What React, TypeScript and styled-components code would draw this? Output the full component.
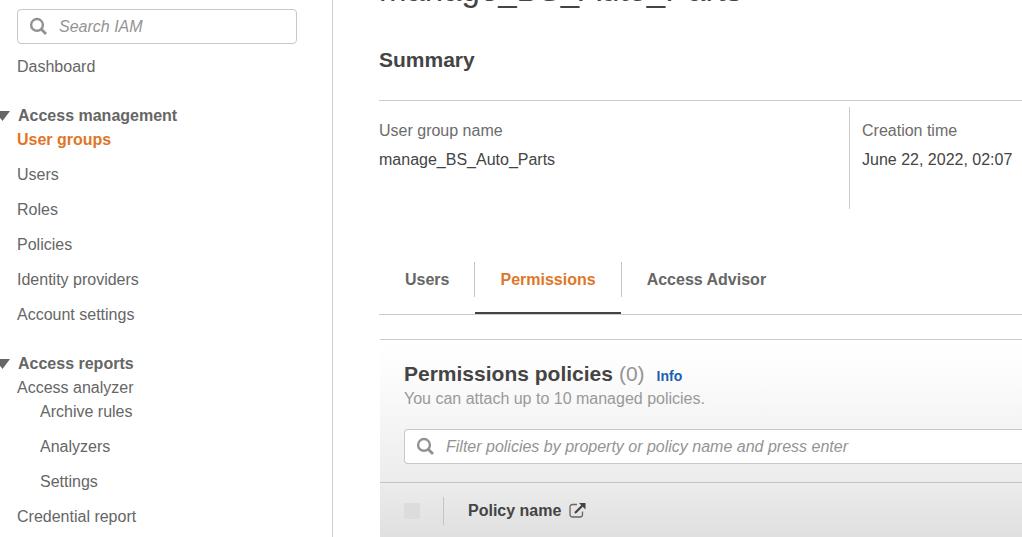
import React from "react";
import styled, { createGlobalStyle } from "styled-components";

const GlobalStyle = createGlobalStyle`
  *, *::before, *::after { box-sizing: border-box; }
  body {
    margin: 0;
    background: #fff;
    color: #444;
    font-family: "Liberation Sans", Arial, Helvetica, sans-serif;
    font-size: 16px;
    line-height: 24px;
    overflow: hidden;
  }
  button, input { font: inherit; color: inherit; }
  h1, h2, h3, p, ul, dl, dt, dd { margin: 0; padding: 0; }
  ul { list-style: none; }
`;

const Page = styled.div`
  display: flex;
  min-height: 100vh;
`;

const Sidebar = styled.nav`
  flex: 0 0 333px;
  padding: 9px 35px 0 17px;
  border-right: 1px solid #ccc;
  overflow: hidden;
`;

const SearchField = styled.label<{ $bleed?: boolean }>`
  display: flex;
  align-items: center;
  gap: 11px;
  height: 35px;
  padding-left: 11px;
  background: #fff;
  border: 1px solid #c8c8c8;
  border-right-width: ${(p) => (p.$bleed ? 0 : 1)}px;
  border-radius: ${(p) => (p.$bleed ? "4px 0 0 4px" : "4px")};
`;

const SearchInput = styled.input`
  flex: 1;
  min-width: 0;
  padding: 0;
  border: 0;
  outline: 0;
  background: transparent;
  &::placeholder {
    color: #949494;
    opacity: 1;
    font-style: italic;
  }
`;

const NavLink = styled.a<{ $active?: boolean }>`
  display: block;
  color: ${(p) => (p.$active ? "#e07628" : "#666")};
  font-weight: ${(p) => (p.$active ? 700 : 400)};
  text-decoration: none;
`;

const Dashboard = styled.div`
  padding: 11px 0 25px;
`;

const Section = styled.section`
  margin-bottom: 25px;
`;

const SectionHeading = styled.h2`
  font-size: 16px;
  line-height: 24px;
`;

const SectionToggle = styled.button`
  display: flex;
  align-items: center;
  gap: 8px;
  margin-left: -22px;
  padding: 0;
  border: 0;
  background: none;
  color: #666;
  font-weight: 700;
`;

const NavList = styled.ul`
  display: flex;
  flex-direction: column;
  gap: 11px;
`;

const SubList = styled(NavList)`
  padding-left: 23px;
`;

const Main = styled.main`
  flex: 1;
  min-width: 0;
  padding-left: 46px;
`;

const Title = styled.h1`
  margin-top: -30px;
  color: #444;
  font-size: 33px;
  font-weight: 400;
  line-height: 40px;
`;

const SummaryHeading = styled.h2`
  padding: 38px 0 28px;
  border-bottom: 1px solid #ccc;
  font-size: 21px;
  line-height: 24px;
`;

const Summary = styled.dl`
  display: grid;
  grid-template-columns: minmax(0, 1fr) 173px;
  padding-top: 6px;
`;

const Fact = styled.div<{ $divided?: boolean }>`
  display: flex;
  flex-direction: column;
  gap: 5px;
  height: 102px;
  padding: 12px 0 0 ${(p) => (p.$divided ? 12 : 0)}px;
  border-left: ${(p) => (p.$divided ? "1px solid #ccc" : "0")};
  white-space: nowrap;
`;

const FactLabel = styled.dt`
  color: #6c6c6c;
`;

const FactValue = styled.dd`
  color: #444;
`;

const TabBar = styled.div`
  display: flex;
  margin-top: 53px;
  padding-left: 1px;
  border-bottom: 1px solid #ccc;
`;

const Tab = styled.button<{ $active?: boolean }>`
  height: 52px;
  padding: 0 0 14px;
  border: 0;
  border-bottom: 2px solid ${(p) => (p.$active ? "#444" : "transparent")};
  background: none;
  color: ${(p) => (p.$active ? "#e07628" : "#666")};
  font-weight: 700;
`;

const TabLabel = styled.span`
  display: block;
  padding: 0 25px;
`;

const TabDivider = styled.span`
  width: 1px;
  height: 35px;
  background: #c4c4c4;
`;

const Panel = styled.section`
  margin: 24px 0 0 1px;
  border-top: 1px solid #ccc;
`;

const PanelHeader = styled.header`
  padding: 21px 0 18px 24px;
  background: linear-gradient(#fff, #fdfdfd 20%, #ececec);
`;

const PanelTitle = styled.div`
  display: flex;
  align-items: baseline;
  gap: 6px;
  height: 26px;
`;

const PanelHeading = styled.h2`
  font-size: 21px;
  line-height: 26px;
`;

const Count = styled.span`
  color: #949494;
  font-size: 21px;
`;

const InfoLink = styled.a`
  margin-left: 6px;
  color: #1a5fb0;
  font-size: 14px;
  line-height: 20px;
  font-weight: 700;
  text-decoration: none;
`;

const Description = styled.p`
  margin-bottom: 18px;
  color: #999;
`;

const Table = styled.table`
  width: 100%;
  border-collapse: collapse;
  border-top: 1px solid #c4c4c4;
  background: linear-gradient(#ececec, #dfdfdf);
`;

const HeadCell = styled.th<{ $select?: boolean }>`
  width: ${(p) => (p.$select ? "63px" : "auto")};
  height: 56px;
  padding: 0;
  text-align: left;
`;

const CellContent = styled.div<{ $divided?: boolean }>`
  display: flex;
  align-items: center;
  gap: 8px;
  height: 28px;
  padding-left: 24px;
  border-left: ${(p) => (p.$divided ? "1px solid #c4c4c4" : "0")};
`;

const SelectAll = styled.input`
  appearance: none;
  width: 16px;
  height: 16px;
  margin: 0;
  border-radius: 1px;
  background: #dcdcdc;
`;

const SearchIcon = () => (
  <svg width="19" height="19" viewBox="0 0 19 19" fill="none" stroke="#929292" aria-hidden="true">
    <circle cx="8" cy="7.9" r="5.9" strokeWidth="2.4" />
    <path d="M12 12l5 5" strokeWidth="2.8" />
  </svg>
);

const Caret = () => (
  <svg width="15" height="10" viewBox="0 0 15 10" fill="#666" aria-hidden="true">
    <path d="M0 0h15L7.5 10z" />
  </svg>
);

const ExternalIcon = () => (
  <svg width="17" height="17" viewBox="0 0 17 17" fill="none" stroke="#444" aria-hidden="true">
    <path
      d="M8 2.500H3.500a2.500 2.500 0 0 0-2.500 2.500v7.500a2.500 2.500 0 0 0 2.500 2.500h7.500a2.500 2.500 0 0 0 2.500-2.500V9.500"
      stroke="#666"
      strokeWidth="1.300"
    />
    <path d="M6 11L13.500 3.500" strokeWidth="2.200" />
    <path d="M10 1H16.500v6.500z" fill="#444" stroke="none" />
  </svg>
);

type NavItem = { label: string; active?: boolean };

const management: NavItem[] = [
  { label: "User groups", active: true },
  { label: "Users" },
  { label: "Roles" },
  { label: "Policies" },
  { label: "Identity providers" },
  { label: "Account settings" },
];

const analyzer: NavItem[] = [{ label: "Archive rules" }, { label: "Analyzers" }, { label: "Settings" }];

const Items = ({ items }: { items: NavItem[] }) => (
  <>
    {items.map((item) => (
      <li key={item.label}>
        <NavLink href="#" $active={item.active} aria-current={item.active ? "page" : undefined}>
          {item.label}
        </NavLink>
      </li>
    ))}
  </>
);

const SectionTitle = ({ children }: { children: React.ReactNode }) => (
  <SectionHeading>
    <SectionToggle type="button" aria-expanded="true">
      <Caret />
      {children}
    </SectionToggle>
  </SectionHeading>
);

export default function App() {
  return (
    <>
      <GlobalStyle />
      <Page>
        <Sidebar aria-label="IAM">
          <SearchField>
            <SearchIcon />
            <SearchInput type="text" aria-label="Search IAM" placeholder="Search IAM" />
          </SearchField>
          <Dashboard>
            <NavLink href="#">Dashboard</NavLink>
          </Dashboard>
          <Section>
            <SectionTitle>Access management</SectionTitle>
            <NavList>
              <Items items={management} />
            </NavList>
          </Section>
          <Section>
            <SectionTitle>Access reports</SectionTitle>
            <NavList>
              <li>
                <NavLink href="#">Access analyzer</NavLink>
                <SubList>
                  <Items items={analyzer} />
                </SubList>
              </li>
              <Items items={[{ label: "Credential report" }]} />
            </NavList>
          </Section>
        </Sidebar>
        <Main>
          <Title>manage_BS_Auto_Parts</Title>
          <SummaryHeading>Summary</SummaryHeading>
          <Summary>
            <Fact>
              <FactLabel>User group name</FactLabel>
              <FactValue>manage_BS_Auto_Parts</FactValue>
            </Fact>
            <Fact $divided>
              <FactLabel>Creation time</FactLabel>
              <FactValue>June 22, 2022, 02:07</FactValue>
            </Fact>
          </Summary>
          <TabBar role="tablist">
            <Tab type="button" role="tab" aria-selected="false">
              <TabLabel>Users</TabLabel>
            </Tab>
            <TabDivider />
            <Tab type="button" role="tab" aria-selected="true" $active>
              <TabLabel>Permissions</TabLabel>
            </Tab>
            <TabDivider />
            <Tab type="button" role="tab" aria-selected="false">
              <TabLabel>Access Advisor</TabLabel>
            </Tab>
          </TabBar>
          <Panel>
            <PanelHeader>
              <PanelTitle>
                <PanelHeading>Permissions policies</PanelHeading>
                <Count>(0)</Count>
                <InfoLink href="#">Info</InfoLink>
              </PanelTitle>
              <Description>You can attach up to 10 managed policies.</Description>
              <SearchField $bleed>
                <SearchIcon />
                <SearchInput
                  type="text"
                  aria-label="Filter policies"
                  placeholder="Filter policies by property or policy name and press enter"
                />
              </SearchField>
            </PanelHeader>
            <Table>
              <thead>
                <tr>
                  <HeadCell $select scope="col">
                    <CellContent>
                      <SelectAll type="checkbox" aria-label="Select all policies" disabled />
                    </CellContent>
                  </HeadCell>
                  <HeadCell scope="col">
                    <CellContent $divided>
                      Policy name
                      <ExternalIcon />
                    </CellContent>
                  </HeadCell>
                </tr>
              </thead>
            </Table>
          </Panel>
        </Main>
      </Page>
    </>
  );
}
